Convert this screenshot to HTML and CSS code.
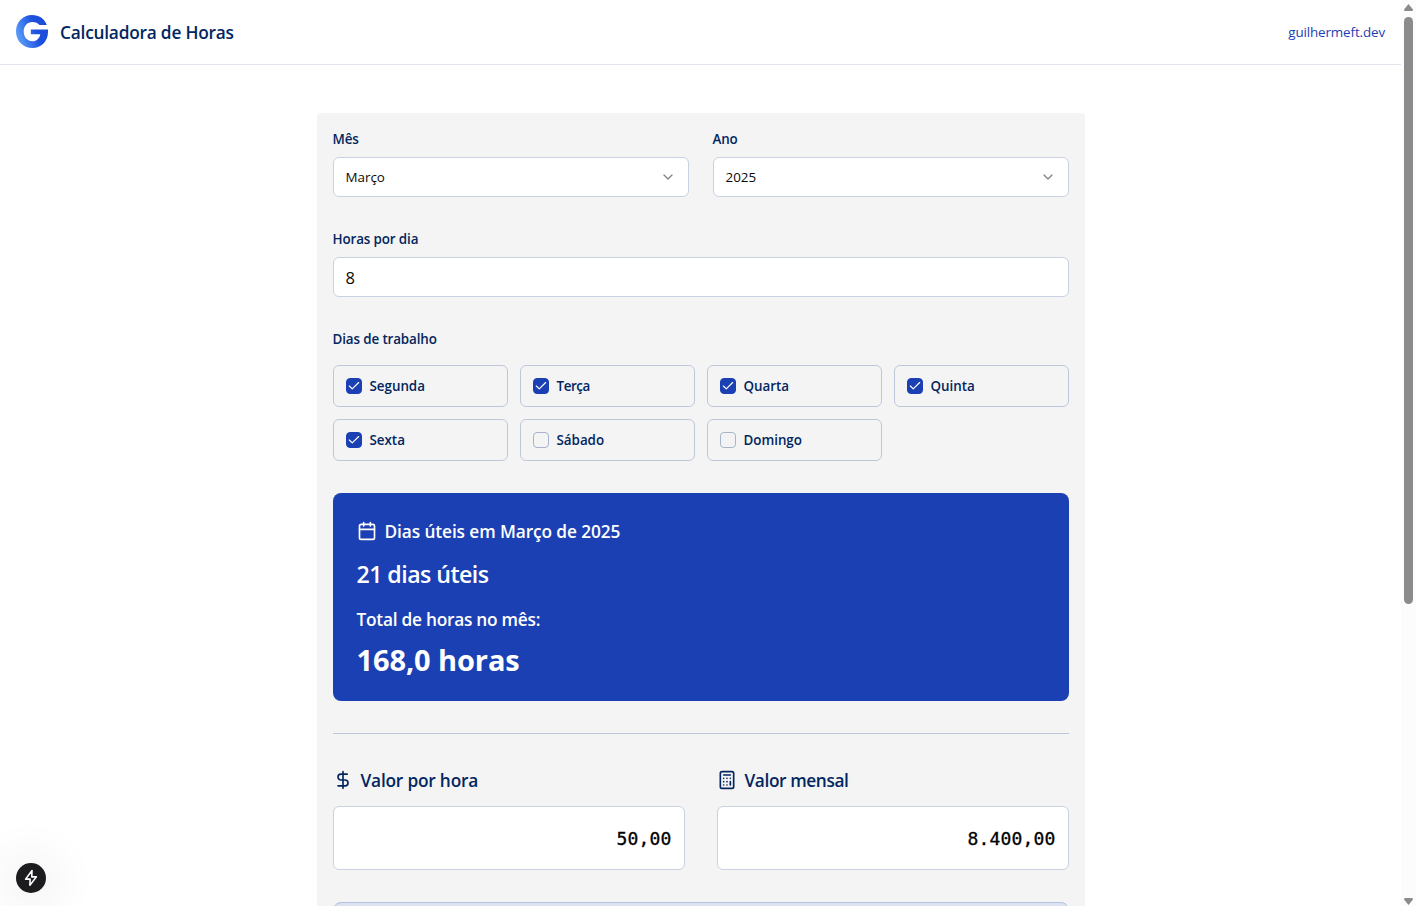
FILE: index.html
```html
<!DOCTYPE html>
<html lang="pt-BR">
<head>
<meta charset="utf-8">
<title>Calculadora de Horas</title>
<link rel="stylesheet" href="styles.css">
</head>
<body>
<div class="window">
  <div class="page">
    <header class="header">
      <div class="brand">
        <svg class="logo" viewBox="0 0 32 33">
          <defs><linearGradient id="g" x1="0" y1="0.75" x2="1" y2="0.4"><stop offset="0" stop-color="#60a5fa"/><stop offset="0.65" stop-color="#1d4fe0"/><stop offset="1" stop-color="#1d4ed8"/></linearGradient></defs>
          <path fill="url(#g)" d="M16 0C23 0 28.500 3.600 30.800 10H23.600C21.800 8 19.500 7 16.500 7C11.200 7 7.700 11.200 7.700 16.500C7.700 22 11.300 26.200 16.500 26.200C20.500 26.200 23.500 23.500 24.300 19.200H14.800V14.600H32V17C32 26 25.500 33 16.500 33C7 33 0 26 0 16.500C0 7 7 0 16 0Z"/>
        </svg>
        <h1 class="title">Calculadora de Horas</h1>
      </div>
      <a class="site-link">guilhermeft.dev</a>
    </header>
    <main class="card">
      <div class="row selects">
        <div class="field"><label class="label">Mês</label><div class="control"><span>Março</span><svg class="chevron" viewBox="0 0 24 24"><path d="m6 9 6 6 6-6"/></svg></div></div>
        <div class="field"><label class="label">Ano</label><div class="control"><span>2025</span><svg class="chevron" viewBox="0 0 24 24"><path d="m6 9 6 6 6-6"/></svg></div></div>
      </div>
      <div class="field"><label class="label">Horas por dia</label><div class="control number">8</div></div>
      <div class="field">
        <span class="label">Dias de trabalho</span>
        <div class="days">
          <div class="day"><i class="box on"><svg viewBox="0 0 24 24"><path d="M20 6 9 17l-5-5"/></svg></i><span>Segunda</span></div>
          <div class="day"><i class="box on"><svg viewBox="0 0 24 24"><path d="M20 6 9 17l-5-5"/></svg></i><span class="tight">Terça</span></div>
          <div class="day"><i class="box on"><svg viewBox="0 0 24 24"><path d="M20 6 9 17l-5-5"/></svg></i><span>Quarta</span></div>
          <div class="day"><i class="box on"><svg viewBox="0 0 24 24"><path d="M20 6 9 17l-5-5"/></svg></i><span>Quinta</span></div>
          <div class="day"><i class="box on"><svg viewBox="0 0 24 24"><path d="M20 6 9 17l-5-5"/></svg></i><span>Sexta</span></div>
          <div class="day"><i class="box"></i><span>Sábado</span></div>
          <div class="day"><i class="box"></i><span>Domingo</span></div>
        </div>
      </div>
      <section class="summary">
        <div class="summary-head"><svg class="icon" viewBox="0 0 24 24"><path d="M8 2v4M16 2v4M3 10h18"/><rect x="3" y="4" width="18" height="18" rx="2"/></svg><span>Dias úteis em Março de 2025</span></div>
        <p class="workdays">21 dias úteis</p>
        <p class="total-label">Total de horas no mês:</p>
        <p class="total">168,0 horas</p>
      </section>
      <hr class="divider">
      <div class="row values">
        <div class="value">
          <div class="value-head"><svg class="icon" viewBox="0 0 24 24"><path d="M12 2v20M17 5H9.500a3.500 3.500 0 0 0 0 7h5a3.500 3.500 0 0 1 0 7H6"/></svg><span>Valor por hora</span></div>
          <div class="amount">50,00</div>
        </div>
        <div class="value">
          <div class="value-head"><svg class="icon" viewBox="0 0 24 24"><rect x="4" y="2" width="16" height="20" rx="2"/><path d="M8 6h8M16 14v4M16 10h.01M12 10h.01M8 10h.01M12 14h.01M8 14h.01M12 18h.01M8 18h.01"/></svg><span class="tight">Valor mensal</span></div>
          <div class="amount">8.400,00</div>
        </div>
      </div>
      <div class="notice"></div>
    </main>
  </div>
  <div class="scrollbar">
    <svg class="arrow" viewBox="0 0 9 7"><path d="M4.500 0 9 5.500Q9 7 8 7H1Q0 7 0 5.500Z"/></svg>
    <div class="thumb"></div>
    <svg class="arrow down" viewBox="0 0 9 7"><path d="M4.500 7 9 1.500Q9 0 8 0H1Q0 0 0 1.500Z"/></svg>
  </div>
  <div class="dev-badge"><svg viewBox="0 0 16 16"><path d="M8.900 1.300 3.200 9H7.200L7 14.500 12.800 7H8.700Z"/></svg></div>
</div>
</body>
</html>
```
FILE: styles.css
```css
* { box-sizing: border-box; }
html, body { margin: 0; height: 906px; overflow: hidden; }
body { font-family: "Open Sans", "Noto Sans", sans-serif; font-size: 13.4px; color: #0a0a0a; background: #fff; }
h1, p { margin: 0; }
.window { position: relative; display: flex; width: 1416px; height: 906px; overflow: hidden; }
.page { width: 1401px; height: 906px; overflow: hidden; }
.header { display: flex; align-items: center; justify-content: space-between; height: 65px; padding: 0 16px; border-bottom: 1px solid #e2e5f0; }
.brand { display: flex; align-items: center; gap: 12px; }
.logo { width: 32px; height: 33px; margin-bottom: 1px; }
.title { padding-top: 2px; font-size: 17.3px; line-height: 28px; font-weight: 600; color: #02265f; letter-spacing: -0.22px; }
.site-link { line-height: 20px; color: #1b40b3; letter-spacing: -0.12px; }
.card { width: 768px; height: 900px; margin: 48px auto 0; padding: 16px; background: #f4f4f4; border-radius: 4px; }
.row { display: flex; }
.selects { gap: 24px; }
.field { flex: 1; margin-bottom: 32px; }
.label { display: block; height: 20px; line-height: 20px; font-weight: 600; color: #02265f; letter-spacing: -0.12px; }
.control { display: flex; align-items: center; justify-content: space-between; height: 40px; padding: 0 12px; background: #fff; border: 1px solid #c9d1e2; border-radius: 6px; margin-top: 8px; }
.number { padding-top: 1px; font-size: 16.5px; }
svg { display: block; flex: none; fill: none; stroke-linecap: round; stroke-linejoin: round; }
.chevron { width: 16px; height: 16px; stroke: #858585; stroke-width: 2; }
.days { display: grid; grid-template-columns: repeat(4, 175px); gap: 12px; margin-top: 16px; }
.day { display: flex; align-items: center; gap: 8px; height: 42px; padding: 0 12px; border: 1px solid #bfc8da; border-radius: 6px; line-height: 20px; font-weight: 600; color: #02265f; letter-spacing: -0.03px; }
.box { display: flex; align-items: center; justify-content: center; width: 16px; height: 16px; border: 1px solid #a7b3cb; border-radius: 4px; }
.box.on { background: #1b40b3; border-color: #1b40b3; }
.box svg { width: 14px; height: 14px; stroke: #fff; stroke-width: 2; }
.tight { letter-spacing: -0.4px; }
.summary { height: 208px; padding: 24px; background: #1b40b3; border-radius: 8px; color: #fff; }
.icon { width: 20px; height: 20px; stroke: currentColor; stroke-width: 2; }
.summary-head { display: flex; align-items: center; gap: 8px; height: 28px; font-size: 17.3px; font-weight: 600; letter-spacing: -0.1px; }
.workdays { margin-top: 13px; font-size: 23.2px; line-height: 32px; font-weight: 600; letter-spacing: -0.56px; }
.total-label { margin-top: 16px; font-size: 17.3px; line-height: 28px; font-weight: 600; letter-spacing: -0.25px; }
.total { margin-top: 8px; font-size: 29px; line-height: 36px; font-weight: 700; letter-spacing: -0.1px; }
.divider { height: 1px; margin: 32px 0; border: 0; background: #bfc8da; }
.values { gap: 32px; }
.value { flex: 1; }
.value-head { display: flex; align-items: center; gap: 8px; height: 28px; font-size: 17.3px; font-weight: 600; color: #02265f; letter-spacing: -0.2px; }
.amount { display: flex; align-items: center; justify-content: flex-end; height: 64px; margin-top: 12px; padding: 0 12px; border: 1px solid #c9d1e2; border-radius: 6px; background: #fff; font: 18px "DejaVu Sans Mono", monospace; letter-spacing: 0.16px; color: #000; -webkit-text-stroke: 0.3px #000; }
.notice { height: 80px; margin-top: 32px; background: #dde2f1; border: 1px solid #b5c1e3; border-radius: 8px; }
.scrollbar { display: flex; flex-direction: column; align-items: center; width: 15px; padding: 4px 0 1px; background: #fcfcfc; }
.arrow { width: 9px; height: 7px; fill: #8b8b8b; }
.thumb { width: 9px; height: 587px; margin-top: 6px; border-radius: 5px; background: #8b8b8b; }
.down { margin-top: auto; }
.dev-badge { position: absolute; left: 16px; top: 863px; display: flex; align-items: center; justify-content: center; width: 30px; height: 30px; border-radius: 50%; background: #1c1c1e; box-shadow: 0 4px 52px 3px #00000024; }
.dev-badge svg { width: 18px; height: 18px; stroke: #fff; stroke-width: 1.4; }
```
